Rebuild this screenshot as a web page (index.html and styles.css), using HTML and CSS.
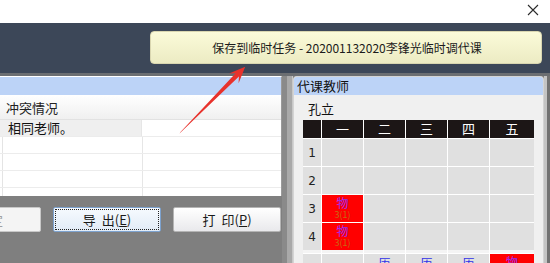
FILE: index.html
```html
<!DOCTYPE html>
<html>
<head>
<meta charset="utf-8">
<link rel="stylesheet" href="styles.css">
</head>
<body>
<div class="window">
  <div class="titlebar">
    <svg class="close" width="12" height="12" viewBox="0 0 12 12"><path d="M1 1 L11 11 M11 1 L1 11" stroke="#2b2b2b" stroke-width="1.1" fill="none"/></svg>
  </div>
  <div class="band">
    <div class="tip">保存到临时任务 - 202001132020李锋光临时调代课</div>
  </div>
  <div class="strip"></div>
  <div class="main">
    <div class="left">
      <div class="lpanel">
        <div class="lhead"></div>
        <div class="colhead">冲突情况</div>
        <div class="lrow first"><div class="c1">相同老师。</div><div class="c2"></div></div>
        <div class="lrow"><div class="c0"></div><div class="c1"></div><div class="c2"></div></div>
        <div class="lrow"><div class="c0"></div><div class="c1"></div><div class="c2"></div></div>
        <div class="lrow"><div class="c0"></div><div class="c1"></div><div class="c2"></div></div>
        <div class="lrow"><div class="c0"></div><div class="c1"></div><div class="c2"></div></div>
      </div>
      <div class="btns">
        <div class="btn disabled">确<span class="sp"> </span>定</div>
        <div class="btn focus"><span class="focusring">导<span class="sp"> </span>出(<u>E</u>)</span></div>
        <div class="btn">打<span class="sp"> </span>印(<u>P</u>)</div>
      </div>
    </div>
    <div class="split"></div>
    <div class="rpanel">
      <div class="rhead">代课教师</div>
      <div class="rbody">
        <div class="tname">孔立</div>
        <div class="grid">
          <div class="th"></div><div class="th">一</div><div class="th">二</div><div class="th">三</div><div class="th">四</div><div class="th">五</div>
          <div class="rn">1</div><div class="cell"></div><div class="cell"></div><div class="cell"></div><div class="cell"></div><div class="cell"></div>
          <div class="rn">2</div><div class="cell"></div><div class="cell"></div><div class="cell"></div><div class="cell"></div><div class="cell"></div>
          <div class="rn">3</div><div class="cell red"><span class="subj">物</span><span class="cls">3(1)</span></div><div class="cell"></div><div class="cell"></div><div class="cell"></div><div class="cell"></div>
          <div class="rn gapafter">4</div><div class="cell red gapafter"><span class="subj">物</span><span class="cls">3(1)</span></div><div class="cell gapafter"></div><div class="cell gapafter"></div><div class="cell gapafter"></div><div class="cell gapafter"></div>
          <div class="rn"></div><div class="cell"></div><div class="cell"><span class="hist">历</span></div><div class="cell"><span class="hist">历</span></div><div class="cell"><span class="hist">历</span></div><div class="cell red"><span class="subj">物</span></div>
        </div>
      </div>
    </div>
    <div class="redge"></div>
  </div>
  <svg class="arrow" width="550" height="263" viewBox="0 0 550 263">
    <polygon points="179.5,133.5 238.9,76.6 238.6,83.2 245.2,66.8 229.0,73.6 235.6,73.2 180.3,132.3" fill="#e8322c"/>
  </svg>
</div>
</body>
</html>
```

FILE: styles.css
```css
html, body {
  margin: 0;
  padding: 0;
}
body {
  width: 550px;
  height: 263px;
  overflow: hidden;
  font-family: "Noto Sans CJK SC", "Noto Sans", sans-serif;
  font-size: 13px;
  color: #1a1a1a;
}
.window {
  position: relative;
  width: 550px;
  height: 263px;
  overflow: hidden;
  background: #7f7f7f;
}
.titlebar {
  height: 23px;
  background: #ffffff;
  display: flex;
  justify-content: flex-end;
  align-items: flex-start;
}
.close {
  margin: 4px 11px 0 0;
}
.band {
  height: 50px;
  background: #3c4758;
  box-sizing: border-box;
  padding: 8px 0 0 150px;
}
.tip {
  width: 392px;
  height: 33px;
  box-sizing: border-box;
  border: 1px solid #d9d6b0;
  border-radius: 4px;
  background: linear-gradient(#fbfbd9, #ecebc3);
  font-size: 12px;
  line-height: 31px;
  text-align: center;
  color: #1b1b1b;
  padding-left: 2px;
}
.strip {
  height: 3px;
  background: #6b6e72;
}
.main {
  display: flex;
  height: 187px;
}
.left {
  width: 282px;
  display: flex;
  flex-direction: column;
}
.lpanel {
  height: 120px;
  background: #ffffff;
  border-top: 1px solid #ffffff;
  box-sizing: border-box;
  overflow: hidden;
  border-right: 1px solid #9a9a9a;
}
.lhead {
  height: 18px;
  background: #bcd3f7;
}
.colhead {
  height: 25px;
  box-sizing: border-box;
  border-bottom: 1px solid #e2e2e2;
  background: linear-gradient(#ffffff, #f0f0f0);
  padding-left: 6px;
  line-height: 25px;
  color: #222;
}
.lrow {
  display: flex;
  height: 17px;
  box-sizing: border-box;
  border-bottom: 1px solid #ececec;
}
.lrow .c0 {
  width: 2px;
  border-right: 1px solid #e4e4e4;
}
.lrow .c1 {
  width: 139px;
  border-right: 1px solid #e6e6e6;
}
.lrow.first .c1 {
  width: 142px;
  background: #efefef;
  padding-left: 8px;
  box-sizing: border-box;
  line-height: 16px;
  color: #111;
}
.lrow .c2 {
  flex: 1;
}
.btns {
  display: flex;
  gap: 12px;
  padding-top: 11px;
  margin-left: -67px;
}
.btn {
  width: 108px;
  height: 25px;
  box-sizing: border-box;
  border: 1px solid #b4b4b4;
  border-radius: 2px;
  background: linear-gradient(#ffffff, #e9e9ec);
  display: flex;
  align-items: center;
  justify-content: center;
  font-size: 13px;
  color: #1a1a1a;
  flex-shrink: 0;
  white-space: pre;
}
.sp {
  display: inline-block;
  width: 6px;
}
.btn.disabled {
  color: #a0a0a0;
  background: #f4f4f4;
  border-color: #c8c8c8;
}
.btn.focus {
  border-color: #7da2ce;
  background: linear-gradient(#f6fafe, #e2ecf7);
  padding: 1px;
}
.focusring {
  flex: 1;
  align-self: stretch;
  border: 1px dotted #222;
  display: flex;
  align-items: center;
  justify-content: center;
}
.split {
  width: 11px;
  background: linear-gradient(to right, #8a8a8a 0, #8a8a8a 5px, #a9a9a9 5px, #a9a9a9 10px, #c8c8c8 10px);
}
.rpanel {
  width: 251px;
  display: flex;
  flex-direction: column;
  background: #f0f0f0;
  border: 1px solid #d4d4d4;
  border-bottom: none;
  border-radius: 4px 4px 0 0;
  box-sizing: border-box;
  overflow: hidden;
}
.rhead {
  height: 18px;
  background: #bcd3f7;
  line-height: 18px;
  padding-left: 3px;
  color: #111;
}
.rbody {
  padding-left: 9px;
}
.tname {
  height: 25px;
  line-height: 27px;
  padding-left: 5px;
  color: #111;
}
.grid {
  display: grid;
  grid-template-columns: 18px 41px 41px 41px 41px 44px;
  grid-template-rows: 18px 27px 27px 27px 30px 27px;
  gap: 1px;
  background: #ffffff;
  width: 231px;
}
.th {
  background: #1c1616;
  color: #ffffff;
  text-align: center;
  line-height: 18px;
  font-size: 13px;
}
.rn {
  background: #e0e0e0;
  font-family: "DejaVu Sans", sans-serif;
  font-size: 12px;
  color: #222;
  display: flex;
  align-items: center;
  justify-content: center;
  box-sizing: border-box;
}
.cell {
  background: #e0e0e0;
  display: flex;
  flex-direction: column;
  align-items: center;
  overflow: hidden;
  box-sizing: border-box;
}
.gapafter {
  border-bottom: 3px solid #f4f4f4;
}
.cell.red {
  background: #ff0000;
}
.subj {
  color: #9a2cf0;
  font-size: 12px;
  line-height: 13px;
  margin-top: 1px;
}
.cls {
  color: #c86a10;
  font-size: 9px;
  line-height: 12px;
}
.hist {
  color: #3030e8;
  font-size: 12px;
  line-height: 13px;
  margin-top: 2px;
}
.redge {
  width: 6px;
  background: linear-gradient(to right, #c4c4c4 0, #c4c4c4 3px, #727272 3px);
}
.arrow {
  position: absolute;
  left: 0;
  top: 0;
}
```
